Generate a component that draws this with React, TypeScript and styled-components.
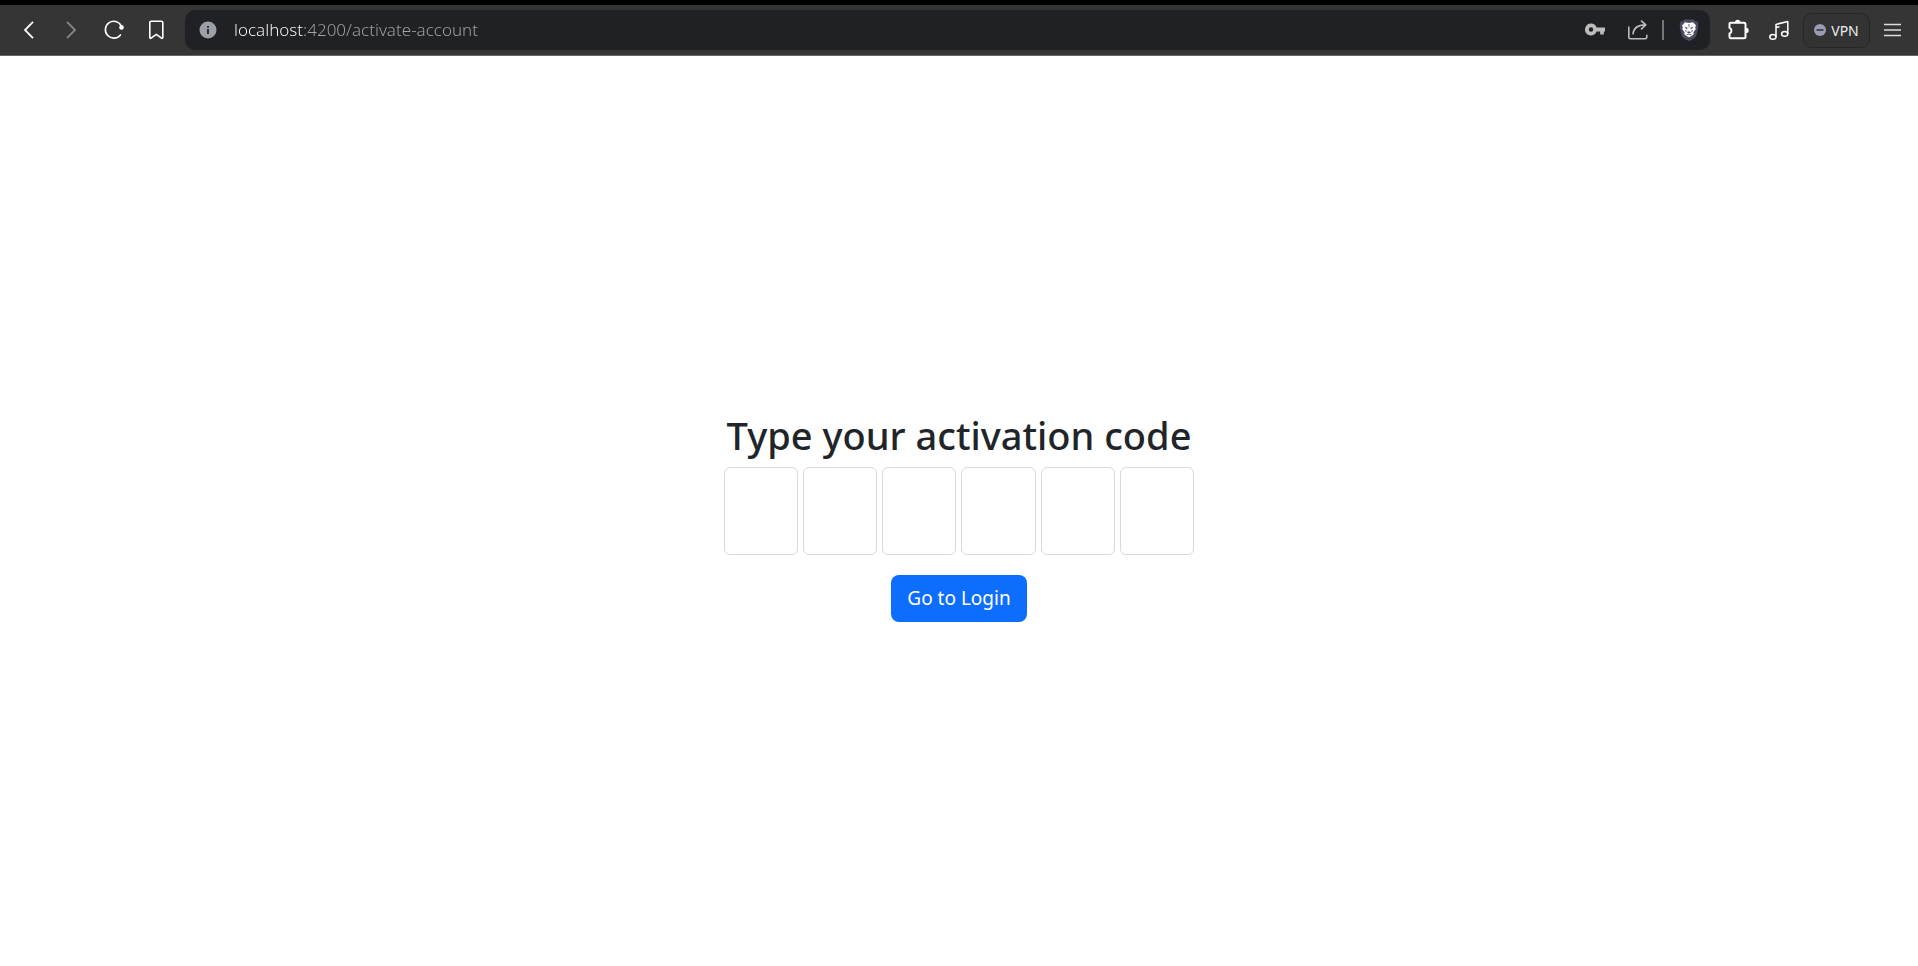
import React, { useRef, useState } from "react";
import styled, { createGlobalStyle } from "styled-components";

const GlobalStyle = createGlobalStyle`
  *, *::before, *::after { box-sizing: border-box; }
  body {
    margin: 0;
    background: #fff;
    color: #212529;
    font-family: "Noto Sans", "Open Sans", sans-serif;
  }
`;

const Page = styled.div`
  min-height: 100vh;
  display: flex;
  flex-direction: column;
`;

const Toolbar = styled.header`
  display: flex;
  align-items: center;
  height: 56px;
  padding: 0 6px 0 8px;
  border-top: 5px solid #000;
  border-bottom: 1px solid #666;
  background: #353535;
`;

const ToolButton = styled.button<{ $width: number; $color?: string }>`
  display: flex;
  flex: none;
  align-items: center;
  justify-content: center;
  width: ${(p) => p.$width}px;
  height: 40px;
  padding: 0;
  border: 0;
  background: none;
  color: ${(p) => p.$color ?? "#fff"};
`;

const AddressBar = styled.div`
  display: flex;
  flex: 1;
  align-items: center;
  min-width: 0;
  height: 40px;
  margin: 0 9px 0 8px;
  border-radius: 10px;
  background: #202124;
`;

const AddressInput = styled.input`
  flex: 1;
  min-width: 0;
  height: 40px;
  padding: 0 0 2px 3px;
  border: 0;
  outline: 0;
  font: 300 17px "Noto Sans", "Open Sans", sans-serif;
  color: #a3a3a3;
  background: linear-gradient(to right, #fff 72px, #a3a3a3 72px);
  background-clip: text;
  -webkit-text-fill-color: transparent;
`;

const Divider = styled.span`
  width: 2px;
  height: 20px;
  margin: 0 3px;
  background: #737578;
`;

const VpnButton = styled.button`
  display: flex;
  flex: none;
  align-items: center;
  justify-content: center;
  gap: 5px;
  width: 67px;
  height: 35px;
  margin: 0 2px 0 4px;
  padding: 0;
  border: 1px solid #262626;
  border-radius: 9px;
  background: #333;
  color: #eee;
  font: 14px "Noto Sans", "Open Sans", sans-serif;
`;

const Main = styled.main`
  display: flex;
  flex: 1;
  flex-direction: column;
  align-items: center;
  justify-content: center;
  padding-top: 10px;
`;

const Title = styled.h1`
  margin: 0 0 8px;
  font-size: 38px;
  font-weight: 500;
  line-height: 48px;
  text-align: center;
`;

const CodeRow = styled.div`
  display: grid;
  grid-template-columns: repeat(6, 1fr);
  gap: 5px;
  width: 100%;
  max-width: 470px;
  margin-bottom: 20px;
`;

const CodeInput = styled.input`
  width: 100%;
  height: 88px;
  border: 1px solid #d9d9d9;
  border-radius: 6px;
  background: #fff;
  color: #212529;
  font: 32px "Noto Sans", "Open Sans", sans-serif;
  text-align: center;
`;

const LoginButton = styled.button`
  height: 47px;
  padding: 0 16px;
  border: 0;
  border-radius: 8px;
  background: #0d6efd;
  color: #fff;
  font: 19px "Noto Sans", "Open Sans", sans-serif;
`;

const BackIcon = () => (
  <svg width="24" height="24" viewBox="0 0 24 24" fill="none" stroke="currentColor" strokeWidth="1.8">
    <path d="M16 3.8 8 12l8 8.2" />
  </svg>
);

const ForwardIcon = () => (
  <svg width="24" height="24" viewBox="0 0 24 24" fill="none" stroke="currentColor" strokeWidth="1.8">
    <path d="m8 3.8 8 8.2-8 8.2" />
  </svg>
);

const ReloadIcon = () => (
  <svg width="24" height="24" viewBox="0 0 24 24" fill="none" stroke="currentColor" strokeWidth="1.6">
    <path d="M18.4 16.9A8.4 8.4 0 1 1 19.2 7.8" strokeLinecap="round" />
    <circle cx="19.5" cy="9.4" r="2.3" fill="currentColor" stroke="none" />
  </svg>
);

const BookmarkIcon = () => (
  <svg width="24" height="24" viewBox="0 0 24 24" fill="none" stroke="currentColor" strokeWidth="1.6" strokeLinejoin="round">
    <path d="M7.2 3.2h10.2a1.4 1.4 0 0 1 1.4 1.4v15a.8.8 0 0 1-1.3.6L12.3 16.4 7.1 20.2a.8.8 0 0 1-1.3-.6V4.6a1.4 1.4 0 0 1 1.4-1.4Z" />
  </svg>
);

const InfoIcon = () => (
  <svg width="18" height="18" viewBox="0 0 18 18">
    <circle cx="9" cy="9" r="8.5" fill="#9aa0a6" />
    <path d="M8.1 8h1.8v5H8.1zM8.1 5h1.8v1.8H8.1z" fill="#202124" />
  </svg>
);

const KeyIcon = () => (
  <svg width="20" height="14" viewBox="0 0 20 14">
    <path
      fillRule="evenodd"
      fill="currentColor"
      d="M6 .5a6 6 0 0 1 5.6 4H20v4h-1.2v3h-3.6v-3h-3.6A6 6 0 1 1 6 .5Zm0 3.8a2.2 2.2 0 1 0 0 4.4 2.2 2.2 0 0 0 0-4.4Z"
    />
  </svg>
);

const ShareIcon = () => (
  <svg width="22" height="22" viewBox="0 0 22 22" fill="none" stroke="currentColor" strokeWidth="1.6" strokeLinejoin="round">
    <path d="M1.8 7.5v10.7a1.6 1.6 0 0 0 1.6 1.6h14.8a1.6 1.6 0 0 0 1.6-1.6v-2.4" />
    <path d="M6 15.4C6.4 9.6 10.4 5.9 18.5 5.9M14 1.6l4.8 4.3-4.8 4.4" />
  </svg>
);

const LionIcon = () => (
  <svg width="20" height="24" viewBox="0 0 20 24">
    <path
      d="M5.2 1.5h9.6l1.9 1.9 1.6-.1 1.1 2.9-.5 1.4.5 1.6-2.1 8.2a5 5 0 0 1-2 2.8L10 23.2l-5.3-3a5 5 0 0 1-2-2.8L.6 9.2l.5-1.6-.5-1.4 1.1-2.9 1.6.1Z"
      fill="#4c4a63"
    />
    <path
      d="m6 4.3 4 .6 4-.6 3 3.2-.9 1.9.7 1.5-2.4 3.4.4 1.8-1.8 1.6L10 19.3l-3-1.6-1.8-1.6.4-1.8-2.4-3.4.7-1.5L3 7.5Z"
      fill="#fff"
    />
    <path
      d="M5.2 8.4 8.6 9.7 8 11.5zM14.8 8.4l-3.4 1.3.6 1.8zM7.9 14.2l2.1-.9 2.1.9-2.1 1.4zM9.5 6h1l-.3 4h-.4z"
      fill="#4c4a63"
    />
    <path d="m7.3 16.9 2.7-.8 2.7.8M6.7 12l.6 2M13.3 12l-.6 2" fill="none" stroke="#4c4a63" strokeWidth=".8" />
  </svg>
);

const PuzzleIcon = () => (
  <svg width="24" height="24" viewBox="0 0 24 24" fill="none" stroke="currentColor" strokeWidth="2" strokeLinejoin="round">
    <path d="M3.5 4.8H17a1.5 1.5 0 0 1 1.5 1.5v12.4a1.5 1.5 0 0 1-1.5 1.5H4a1.5 1.5 0 0 1-1.5-1.5v-3.2c2.6-.8 2.6-4.8 0-5.6V5.8a1 1 0 0 1 1-1Z" />
    <path d="M8 4.4a2.7 2.7 0 0 1 5.4 0ZM19 9.7a2.7 2.7 0 0 1 0 5.4Z" fill="currentColor" stroke="none" />
  </svg>
);

const MusicIcon = () => (
  <svg width="22" height="22" viewBox="0 0 22 22" fill="none" stroke="currentColor" strokeWidth="1.5" strokeLinejoin="round">
    <path d="M8 17.8V5.4L19.8 2.4v12.4M8 8.6l3.5-.9" />
    <ellipse cx="4.9" cy="17.9" rx="3.1" ry="2.3" />
    <ellipse cx="16.7" cy="14.9" rx="3.1" ry="2.3" />
  </svg>
);

const VpnIcon = () => (
  <svg width="12" height="12" viewBox="0 0 12 12">
    <circle cx="6" cy="6" r="6" fill="#999cb2" />
    <path d="M2.6 5.2h6.8v1.6H2.6z" fill="#333" />
  </svg>
);

const MenuIcon = () => (
  <svg width="18" height="16" viewBox="0 0 18 16" fill="none" stroke="currentColor" strokeWidth="1.4">
    <path d="M1 2.5h17M1 8h17M1 13.5h17" />
  </svg>
);

const CODE_LENGTH = 6;

export default function App() {
  const [address, setAddress] = useState("localhost:4200/activate-account");
  const [digits, setDigits] = useState<string[]>(Array(CODE_LENGTH).fill(""));
  const inputs = useRef<(HTMLInputElement | null)[]>([]);

  const updateDigit = (index: number, value: string) => {
    setDigits((current) => current.map((d, i) => (i === index ? value : d)));
    if (value) inputs.current[index + 1]?.focus();
  };

  return (
    <>
      <GlobalStyle />
      <Page>
        <Toolbar>
          <ToolButton $width={42} aria-label="Back"><BackIcon /></ToolButton>
          <ToolButton $width={42} $color="#888" aria-label="Forward"><ForwardIcon /></ToolButton>
          <ToolButton $width={43} aria-label="Reload"><ReloadIcon /></ToolButton>
          <ToolButton $width={42} aria-label="Bookmark"><BookmarkIcon /></ToolButton>
          <AddressBar>
            <ToolButton $width={46} aria-label="Site information"><InfoIcon /></ToolButton>
            <AddressInput
              aria-label="Address"
              value={address}
              spellCheck={false}
              onChange={(e) => setAddress(e.target.value)}
            />
            <ToolButton $width={43} $color="#bdbdbd" aria-label="Passwords"><KeyIcon /></ToolButton>
            <ToolButton $width={43} $color="#bdbdbd" aria-label="Share"><ShareIcon /></ToolButton>
            <Divider />
            <ToolButton $width={43} aria-label="Shields"><LionIcon /></ToolButton>
          </AddressBar>
          <ToolButton $width={40} aria-label="Extensions"><PuzzleIcon /></ToolButton>
          <ToolButton $width={40} aria-label="Media"><MusicIcon /></ToolButton>
          <VpnButton><VpnIcon />VPN</VpnButton>
          <ToolButton $width={40} $color="#ddd" aria-label="Menu"><MenuIcon /></ToolButton>
        </Toolbar>
        <Main>
          <Title>Type your activation code</Title>
          <CodeRow>
            {digits.map((digit, i) => (
              <CodeInput
                key={i}
                ref={(el) => { inputs.current[i] = el; }}
                aria-label={`Digit ${i + 1}`}
                inputMode="numeric"
                maxLength={1}
                value={digit}
                onChange={(e) => updateDigit(i, e.target.value)}
              />
            ))}
          </CodeRow>
          <LoginButton>Go to Login</LoginButton>
        </Main>
      </Page>
    </>
  );
}
